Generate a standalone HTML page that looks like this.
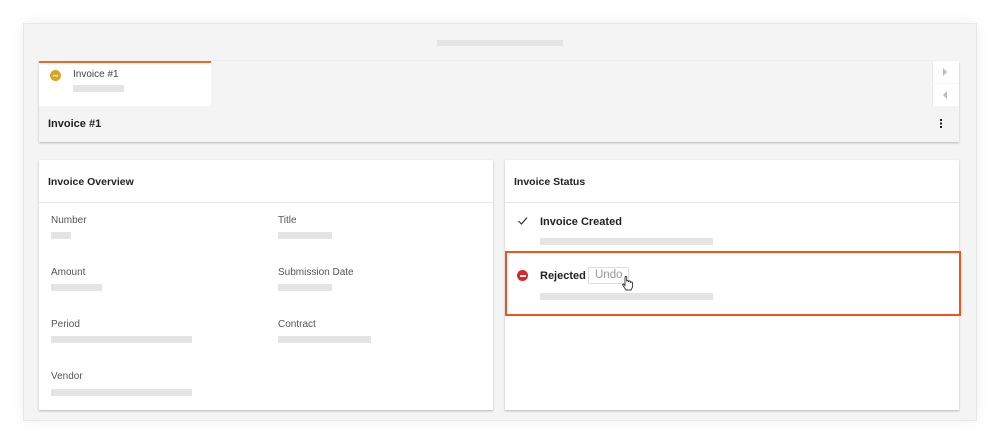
<!DOCTYPE html>
<html><head><style>
*{box-sizing:border-box;margin:0;padding:0}
body{width:1000px;height:445px;background:#fff;font-family:"Liberation Sans",sans-serif;position:relative;overflow:hidden}
.abs{position:absolute}
.frame{left:23px;top:23px;width:954px;height:398px;background:#f4f4f4;border:1px solid #e6e6e6;box-shadow:0 0 14px rgba(0,0,0,.06)}
.bar{background:#e4e4e4;height:7px;position:absolute}
.card{background:#fff;box-shadow:0 1px 2px rgba(0,0,0,.25)}
.lbl{position:absolute;font-size:10px;color:#555}
.h{position:absolute;font-size:11px;font-weight:bold;color:#222}
</style></head><body>
<div class="abs frame"></div>
<div class="bar" style="left:437px;top:40px;width:126px;height:6px"></div>
<div class="abs" style="left:39px;top:61px;width:920px;height:81px;background:#f4f4f4;box-shadow:0 1px 2px rgba(0,0,0,.25)"></div>
<div class="abs" style="left:39px;top:61px;width:172px;height:45px;background:#fff;border-top:2px solid #f26522"></div>
<div class="abs" style="left:50px;top:70px;width:11px;height:11px;border-radius:50%;background:#d9a520"></div>
<svg class="abs" style="left:50px;top:70px" width="11" height="11"><path d="M3 6.5 Q4.2 4.5 5.5 5.8 Q6.8 7 8 5" stroke="#fff" stroke-width="1" fill="none"/></svg>
<div class="abs" style="left:73px;top:69px;font-size:10px;color:#444">Invoice #1</div>
<div class="bar" style="left:73px;top:85px;width:51px"></div>
<div class="abs" style="left:932px;top:61px;width:27px;height:22px;background:#fff;border-left:1px solid #e8e8e8"></div>
<div class="abs" style="left:932px;top:84px;width:27px;height:22px;background:#fff;border-left:1px solid #e8e8e8"></div>
<svg class="abs" style="left:940px;top:66px" width="10" height="12"><path d="M3 2 L7 6 L3 10Z" fill="#bbb"/></svg>
<svg class="abs" style="left:940px;top:89px" width="10" height="12"><path d="M7 2 L3 6 L7 10Z" fill="#bbb"/></svg>
<div class="h" style="left:48px;top:118px;font-size:11px">Invoice #1</div>
<div class="abs" style="left:940px;top:119px;width:2px;height:2px;background:#222;box-shadow:0 3.5px 0 #222,0 7px 0 #222"></div>
<div class="abs card" style="left:39px;top:160px;width:454px;height:250px"></div>
<div class="h" style="left:48px;top:176px;font-size:10.5px">Invoice Overview</div>
<div class="abs" style="left:39px;top:202px;width:454px;height:1px;background:#e8e8e8"></div>
<div class="lbl" style="left:51px;top:215px">Number</div><div class="bar" style="left:51px;top:232px;width:20px"></div>
<div class="lbl" style="left:278px;top:215px">Title</div><div class="bar" style="left:278px;top:232px;width:54px"></div>
<div class="lbl" style="left:51px;top:267px">Amount</div><div class="bar" style="left:51px;top:284px;width:51px"></div>
<div class="lbl" style="left:278px;top:267px">Submission Date</div><div class="bar" style="left:278px;top:284px;width:54px"></div>
<div class="lbl" style="left:51px;top:319px">Period</div><div class="bar" style="left:51px;top:336px;width:141px"></div>
<div class="lbl" style="left:278px;top:319px">Contract</div><div class="bar" style="left:278px;top:336px;width:93px"></div>
<div class="lbl" style="left:51px;top:371px">Vendor</div><div class="bar" style="left:51px;top:389px;width:141px"></div>
<div class="abs card" style="left:505px;top:160px;width:454px;height:250px"></div>
<div class="h" style="left:514px;top:176px;font-size:10.5px">Invoice Status</div>
<div class="abs" style="left:505px;top:202px;width:454px;height:1px;background:#e8e8e8"></div>
<svg class="abs" style="left:517px;top:216px" width="12" height="10"><path d="M1.5 5 L4.5 8 L10 1.5" stroke="#333" stroke-width="1.2" fill="none"/></svg>
<div class="h" style="left:540px;top:216px;font-size:11px">Invoice Created</div>
<div class="bar" style="left:540px;top:238px;width:173px"></div>
<div class="abs" style="left:505px;top:251px;width:456px;height:65px;border:2px solid #f4511e"></div>
<div class="abs" style="left:517px;top:270px;width:11px;height:11px;border-radius:50%;background:#d9262b"></div>
<div class="abs" style="left:519.5px;top:274.5px;width:6px;height:2px;background:#fff"></div>
<div class="h" style="left:540px;top:270px;font-size:11px">Rejected</div>
<div class="abs" style="left:588px;top:267px;width:41px;height:17px;border:1px solid #ddd;border-radius:2px;font-size:11.5px;color:#999;padding:1px 0 0 6px">Undo</div>
<svg class="abs" style="left:621px;top:276px" width="14" height="16"><path d="M4 1.5 v8 l-1.5-1.5 q-1.5 0 -0.5 1.5 l3 4.5 h5 l1.5-3 v-4 q0-1-1-1 q-1 0-1 1 v-1 q0-1-1-1 q-1 0-1 1 v-0.5 q0-1-1-1 q-0.8 0-0.8 1 v-4 q0-1-0.8-1 q-0.9 0-0.9 1z" fill="#fff" stroke="#333" stroke-width="0.9"/></svg>
<div class="bar" style="left:540px;top:293px;width:173px"></div>
</body></html>
